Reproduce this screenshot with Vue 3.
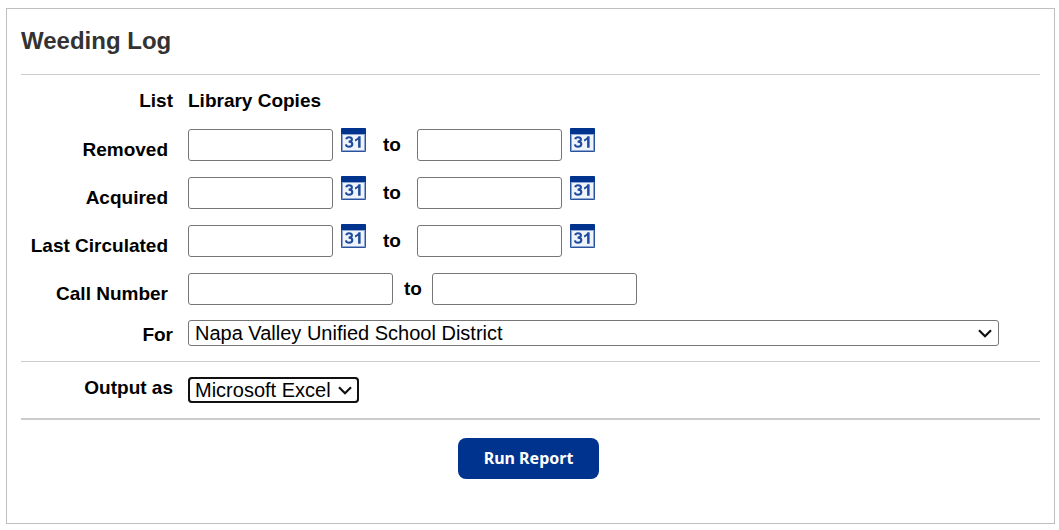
<script setup>
import { reactive, ref } from 'vue'

const dateRows = reactive([
  { id: 'removed', label: 'Removed', from: '', to: '' },
  { id: 'acquired', label: 'Acquired', from: '', to: '' },
  { id: 'circulated', label: 'Last Circulated', from: '', to: '' }
])
const callNumber = reactive({ from: '', to: '' })
const site = ref('Napa Valley Unified School District')
const output = ref('Microsoft Excel')
</script>

<template>
  <main class="panel">
    <h1 class="title">Weeding Log</h1>
    <form @submit.prevent>
      <section class="criteria">
        <div class="row list-row">
          <span class="label">List</span>
          <span>Library Copies</span>
        </div>

        <div v-for="row in dateRows" :key="row.id" class="row">
          <label class="label inset" :for="row.id + '-from'">{{ row.label }}</label>
          <div class="range">
            <template v-for="end in ['from', 'to']" :key="end">
              <label v-if="end === 'to'" class="to" :for="row.id + '-to'">to</label>
              <input :id="row.id + '-' + end" v-model="row[end]" class="box date" type="text" />
              <button class="calendar" type="button" :aria-label="row.label + ' ' + end + ' calendar'">
                <svg width="25" height="24" viewBox="0 0 25 24" aria-hidden="true">
                  <rect width="25" height="24" rx="1" fill="#2a529f" />
                  <rect x="1" y="6" width="23" height="17" fill="#8fa6d0" />
                  <rect x="2" y="7" width="21" height="15" fill="#eff3fa" />
                  <path d="M1 0h23l1 1v5H0V1z" fill="#00338d" />
                  <path
                    d="M5.2 11.3C5.5 9.8 6.6 9.2 8 9.2c1.8 0 2.9.9 2.9 2.2 0 1.4-1.1 2.2-3.3 2.2 2.5 0 3.7.9 3.7 2.5 0 1.7-1.4 2.7-3.3 2.7-1.7 0-2.8-.8-3.1-2.4"
                    fill="none" stroke="#1f4b9e" stroke-width="2.1" />
                  <path d="M17.4 8.2h2.2v11.6h-2.5v-8c-.9.8-1.9 1.3-3 1.6v-2.1c1.7-.6 2.8-1.6 3.3-3.1z" fill="#1f4b9e" />
                </svg>
              </button>
            </template>
          </div>
        </div>

        <div class="row">
          <label class="label inset" for="call-from">Call Number</label>
          <div class="range">
            <input id="call-from" v-model="callNumber.from" class="box call" type="text" />
            <label class="to narrow" for="call-to">to</label>
            <input id="call-to" v-model="callNumber.to" class="box call" type="text" />
          </div>
        </div>

        <div class="row site-row">
          <label class="label drop" for="site">For</label>
          <div class="select-wrap wide">
            <select id="site" v-model="site">
              <option>Napa Valley Unified School District</option>
            </select>
            <svg class="chevron" width="14" height="9" viewBox="0 0 14 9" aria-hidden="true">
              <path d="M1 1.2l6 6 6-6" />
            </svg>
          </div>
        </div>
      </section>

      <section class="output">
        <div class="row">
          <label class="label" for="output">Output as</label>
          <div class="select-wrap active">
            <select id="output" v-model="output">
              <option>Microsoft Excel</option>
            </select>
            <svg class="chevron" width="14" height="9" viewBox="0 0 14 9" aria-hidden="true">
              <path d="M1 1.2l6 6 6-6" />
            </svg>
          </div>
        </div>
      </section>

      <div class="actions">
        <button class="run" type="submit">Run Report</button>
      </div>
    </form>
  </main>
</template>

<style>
body {
  background: #fff;
}
</style>

<style scoped>
.panel {
  display: flow-root;
  box-sizing: border-box;
  margin: 8px 4px 6px 6px;
  padding: 0 14px 44px;
  border: 1px solid #bfbfbf;
  color: #000;
  font: bold 19px/22px "Liberation Sans", Arial, sans-serif;
}
.title {
  margin: 0;
  padding: 18px 0 19px;
  border-bottom: 1px solid #ccc;
  color: #333;
  font-size: 24px;
  line-height: 28px;
}
.criteria {
  display: flex;
  flex-direction: column;
  gap: 16px;
  padding: 15px 0;
  border-bottom: 1px solid #ccc;
}
.row {
  display: grid;
  grid-template-columns: 152px 1fr;
  column-gap: 15px;
  align-items: start;
}
.list-row {
  padding-bottom: 1px;
}
.site-row {
  margin-top: -1px;
}
.label {
  text-align: right;
}
.inset {
  padding: 10px 5px 0 0;
}
.drop {
  padding-top: 4px;
}
.range {
  display: flex;
  align-items: flex-start;
}
.box {
  box-sizing: border-box;
  height: 32px;
  margin: 0;
  padding: 2px 6px;
  border: 1px solid #767676;
  border-radius: 3px;
  background: #fff;
  font: 20px "Liberation Sans", Arial, sans-serif;
}
.date {
  width: 145px;
}
.call {
  width: 205px;
}
.calendar {
  height: 24px;
  margin: -1px 0 0 8px;
  padding: 0;
  border: 0;
  background: none;
  cursor: pointer;
}
.calendar svg {
  display: block;
}
.to {
  padding: 5px 16px 0 17px;
}
.narrow {
  padding: 5px 10px 0 11px;
}
.select-wrap {
  position: relative;
  justify-self: start;
}
.wide {
  justify-self: stretch;
  margin-right: 41px;
}
select {
  appearance: none;
  display: block;
  box-sizing: border-box;
  width: 100%;
  height: 26px;
  margin: 0;
  padding: 0 27px 0 6px;
  border: 1px solid #767676;
  border-radius: 3px;
  background: #fff;
  color: #000;
  font: 20px/24px "Liberation Sans", Arial, sans-serif;
}
.active select {
  border-radius: 4px;
  outline: 2px solid #101010;
  outline-offset: -2px;
}
.chevron {
  position: absolute;
  top: 9px;
  right: 7px;
  pointer-events: none;
}
.chevron path {
  fill: none;
  stroke: #101010;
  stroke-width: 2.2;
}
.output {
  padding: 15px 0;
  border-bottom: 2px solid #ccc;
}
.actions {
  display: flex;
  justify-content: center;
  padding: 18px 4px 0 0;
}
.run {
  height: 41px;
  padding: 0 26px 2px;
  border: 0;
  border-radius: 8px;
  background: #00338d;
  color: #fff;
  font: bold 16px "Noto Sans", "Open Sans", sans-serif;
  cursor: pointer;
}
</style>
